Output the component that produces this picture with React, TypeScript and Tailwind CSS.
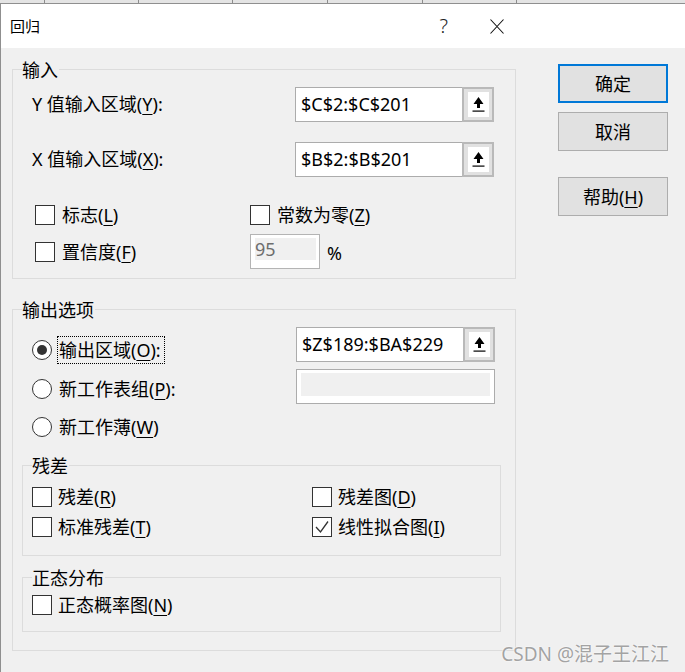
import type { ReactNode } from 'react'

const FONT = "font-['Noto_Sans','Noto_Sans_CJK_SC',sans-serif]"

function CheckBox({ checked = false }: { checked?: boolean }) {
  return (
    <span className="flex h-[20px] w-[20px] shrink-0 items-center justify-center border border-[#333] bg-white">
      {checked && (
        <svg width="18" height="18" viewBox="0 0 18 18" fill="none">
          <polyline points="3,9 7.5,14 15,3.5" stroke="#333" strokeWidth="1.3" />
        </svg>
      )}
    </span>
  )
}

function Radio({ on = false }: { on?: boolean }) {
  return (
    <span className="flex h-[20px] w-[20px] shrink-0 items-center justify-center rounded-full border-[1.5px] border-[#333] bg-white">
      {on && <span className="h-[10px] w-[10px] rounded-full bg-[#333]" />}
    </span>
  )
}

function PickButton() {
  return (
    <span className="flex h-[35px] w-[32px] shrink-0 items-center justify-center border-2 border-[#b9b9b9] bg-[#e1e1e1]">
      <span className="flex h-[25px] w-[21px] items-center justify-center bg-white">
        <svg width="13" height="17" viewBox="0 0 13 17">
          <path d="M6.5 1 L11.5 8 L8 8 L8 12 L5 12 L5 8 L1.5 8 Z" fill="#000" />
          <rect x="0.5" y="14.5" width="12" height="1.2" fill="#000" />
        </svg>
      </span>
    </span>
  )
}

function RangeInput({ value }: { value: string }) {
  return (
    <div className="flex h-[35px] w-[199px]">
      <div className="flex-1 border border-r-0 border-[#acacac] bg-white pl-[5px] text-[18px] leading-[32px] text-black">
        {value}
      </div>
      <PickButton />
    </div>
  )
}

function Group({ title, className, children }: { title: string; className: string; children: ReactNode }) {
  return (
    <div className={`relative border border-[#dcdcdc] ${className}`}>
      <span className="absolute left-[9px] top-[-11px] bg-[#f0f0f0] pr-[1px] text-[18px] leading-[22px]">{title}</span>
      {children}
    </div>
  )
}

function Label({ children }: { children: ReactNode }) {
  return <span className="text-[18px] leading-[24px] whitespace-nowrap">{children}</span>
}

function Key({ k }: { k: string }) {
  return <u className="underline-offset-[3px]">{k}</u>
}

export default function App() {
  return (
    <div className={`relative h-[672px] w-[685px] overflow-hidden bg-[#f0f0f0] text-black ${FONT}`}>
      <div className="flex h-[3px] bg-[#e4e4e4]">
        <div className="w-[45px] border-r border-[#8c8c8c]" />
        <div className="w-[94px] border-r border-[#8c8c8c]" />
        <div className="w-[94px] border-r border-[#8c8c8c]" />
        <div className="w-[95px] border-r border-[#8c8c8c]" />
        <div className="w-[95px] border-r border-[#8c8c8c]" />
        <div className="w-[94px] border-r border-[#8c8c8c]" />
      </div>

      <div className="flex h-[669px] flex-col border-l border-t border-[#8f8f8f]">
        {/* title bar */}
        <div className="flex h-[44px] items-center bg-white pl-[9px]">
          <span className="text-[15px] leading-[20px]">回归</span>
          <span className="ml-auto text-[20px] font-light leading-[20px] text-[#222]">?</span>
          <svg className="ml-[42px] mr-[181px]" width="14" height="15" viewBox="0 0 14 15">
            <path d="M0.5 0.5 L13.5 14.5 M13.5 0.5 L0.5 14.5" stroke="#111" strokeWidth="1.1" />
          </svg>
        </div>

        <div className="flex pl-[11px]">
          {/* left column */}
          <div className="w-[504px]">
            <Group title="输入" className="mt-[21px]">
              <div className="pb-[9px] pl-[19px] pt-[17px]">
                <div className="flex h-[35px] items-center">
                  <div className="w-[263px]">
                    <Label>
                      Y 值输入区域(<Key k="Y" />):
                    </Label>
                  </div>
                  <RangeInput value="$C$2:$C$201" />
                </div>
                <div className="mt-[20px] flex h-[35px] items-center">
                  <div className="w-[263px]">
                    <Label>
                      X 值输入区域(<Key k="X" />):
                    </Label>
                  </div>
                  <RangeInput value="$B$2:$B$201" />
                </div>
                <div className="ml-[3px] mt-[28px] flex h-[20px] items-center">
                  <div className="flex w-[215px] items-center gap-[7px]">
                    <CheckBox />
                    <Label>
                      标志(<Key k="L" />)
                    </Label>
                  </div>
                  <div className="flex items-center gap-[7px]">
                    <CheckBox />
                    <Label>
                      常数为零(<Key k="Z" />)
                    </Label>
                  </div>
                </div>
                <div className="ml-[3px] mt-[9px] flex h-[35px] items-center">
                  <div className="flex w-[215px] items-center gap-[7px]">
                    <CheckBox />
                    <Label>
                      置信度(<Key k="F" />)
                    </Label>
                  </div>
                  <div className="flex h-[35px] w-[70px] border border-[#b4b4b4] bg-white pl-[4px] pr-[3px] pt-[3px] pb-[8px]">
                    <div className="flex-1 bg-[#f0f0f0] text-[18px] leading-[22px] text-[#6d6d6d]">95</div>
                  </div>
                  <span className="ml-[7px] mt-[2px] text-[18px] leading-[24px]">%</span>
                </div>
              </div>
            </Group>

            <Group title="输出选项" className="mt-[30px]">
              <div className="pb-[18px]">
                <div className="flex">
                  <div className="w-[283px] pl-[19px] pt-[26px]">
                    <div className="flex h-[28px] items-center gap-[5px]">
                      <Radio on />
                      <span className="flex h-[28px] items-center border border-dotted border-black pl-[1px] pr-[3px]">
                        <Label>
                          输出区域(<Key k="O" />):
                        </Label>
                      </span>
                    </div>
                    <div className="mt-[11px] flex h-[28px] items-center gap-[5px]">
                      <Radio />
                      <span className="flex h-[28px] items-center border border-transparent pl-[1px]">
                        <Label>
                          新工作表组(<Key k="P" />):
                        </Label>
                      </span>
                    </div>
                    <div className="mt-[10px] flex h-[28px] items-center gap-[5px]">
                      <Radio />
                      <span className="flex h-[28px] items-center border border-transparent pl-[1px]">
                        <Label>
                          新工作薄(<Key k="W" />)
                        </Label>
                      </span>
                    </div>
                  </div>
                  <div className="pt-[17px]">
                    <RangeInput value="$Z$189:$BA$229" />
                    <div className="mt-[7px] flex h-[35px] w-[199px] border border-[#acacac] bg-white px-[4px] pt-[3px] pb-[7px]">
                      <div className="flex-1 bg-[#f0f0f0]" />
                    </div>
                  </div>
                </div>

                <Group title="残差" className="ml-[9px] mt-[24px] w-[479px]">
                  <div className="pb-[18px] pl-[9px] pt-[21px]">
                    <div className="flex h-[20px] items-center">
                      <div className="flex w-[280px] items-center gap-[6px]">
                        <CheckBox />
                        <Label>
                          残差(<Key k="R" />)
                        </Label>
                      </div>
                      <div className="flex items-center gap-[6px]">
                        <CheckBox />
                        <Label>
                          残差图(<Key k="D" />)
                        </Label>
                      </div>
                    </div>
                    <div className="mt-[10px] flex h-[20px] items-center">
                      <div className="flex w-[280px] items-center gap-[6px]">
                        <CheckBox />
                        <Label>
                          标准残差(<Key k="T" />)
                        </Label>
                      </div>
                      <div className="flex items-center gap-[6px]">
                        <CheckBox checked />
                        <Label>
                          线性拟合图(<Key k="I" />)
                        </Label>
                      </div>
                    </div>
                  </div>
                </Group>

                <Group title="正态分布" className="ml-[9px] mt-[21px] w-[479px]">
                  <div className="pb-[16px] pl-[9px] pt-[17px]">
                    <div className="flex h-[20px] items-center gap-[6px]">
                      <CheckBox />
                      <Label>
                        正态概率图(<Key k="N" />)
                      </Label>
                    </div>
                  </div>
                </Group>
              </div>
            </Group>
          </div>

          {/* right column: buttons */}
          <div className="ml-[42px] flex w-[110px] flex-col">
            <button className="mt-[16px] h-[39px] border-2 border-[#0078d7] bg-[#e1e1e1] text-[18px] leading-[24px]">
              确定
            </button>
            <button className="mt-[9px] h-[39px] border border-[#adadad] bg-[#e1e1e1] text-[18px] leading-[24px]">
              取消
            </button>
            <button className="mt-[26px] h-[39px] border border-[#adadad] bg-[#e1e1e1] text-[18px] leading-[24px]">
              帮助(<Key k="H" />)
            </button>
          </div>
        </div>
      </div>

      <span className="absolute bottom-[6px] right-[16px] text-[19px] leading-[24px] text-[#a3a3a3] [text-shadow:0_0_2px_#fff,0_0_1px_#fff]">
        CSDN @混子王江江
      </span>
    </div>
  )
}
